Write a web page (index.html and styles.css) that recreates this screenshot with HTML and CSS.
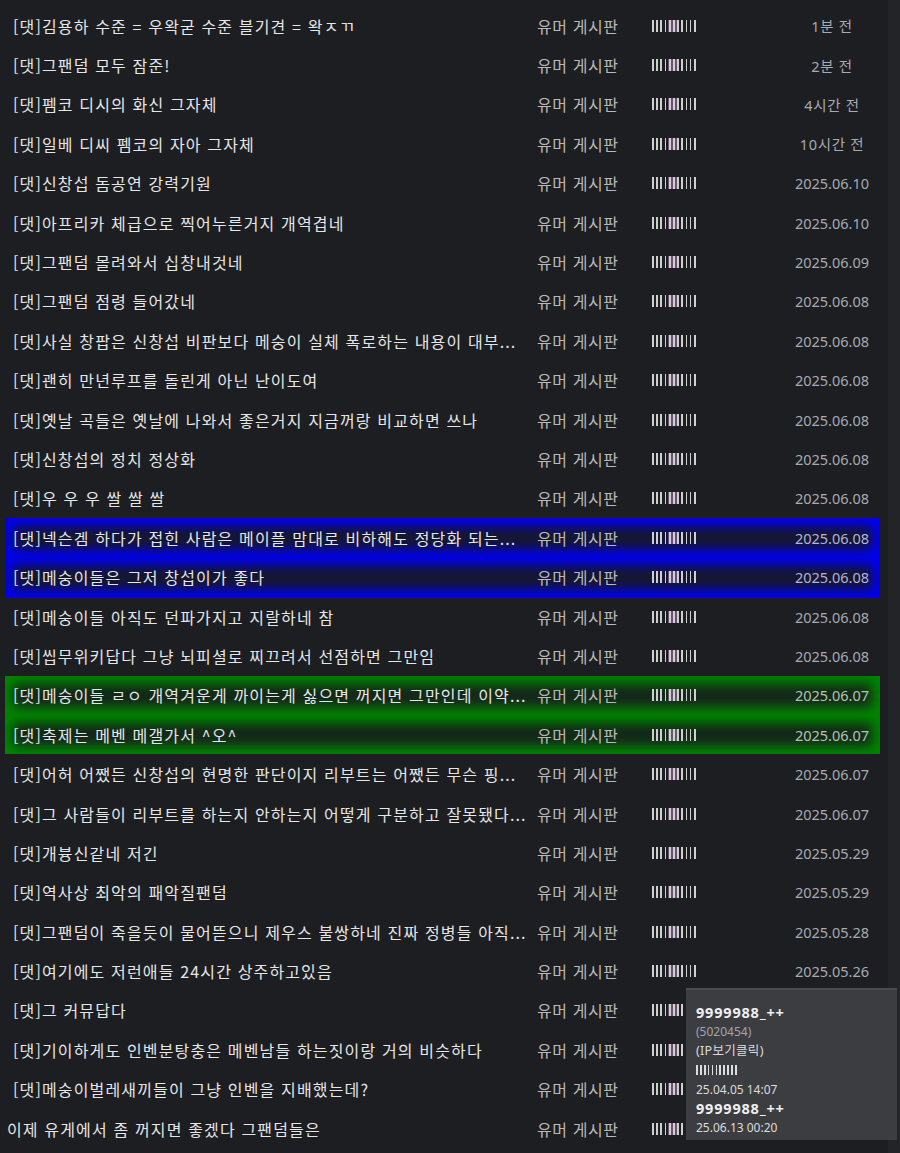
FILE: index.html
```html
<!DOCTYPE html>
<html lang="ko">
<head>
<meta charset="utf-8">
<title>댓글 목록</title>
<link rel="stylesheet" href="styles.css">
</head>
<body>
<div class="page">
  <div class="list">
    <div class="row"><span class="title">[댓]김용하 수준 = 우왁굳 수준 블기견 = 왁ㅈㄲ</span><span class="board">유머 게시판</span><span class="nickcell"><span class="nick"></span></span><span class="date date-rel">1분 전</span></div>
    <div class="row"><span class="title">[댓]그팬덤 모두 잠준!</span><span class="board">유머 게시판</span><span class="nickcell"><span class="nick"></span></span><span class="date date-rel">2분 전</span></div>
    <div class="row"><span class="title">[댓]펨코 디시의 화신 그자체</span><span class="board">유머 게시판</span><span class="nickcell"><span class="nick"></span></span><span class="date date-rel">4시간 전</span></div>
    <div class="row"><span class="title">[댓]일베 디씨 펨코의 자아 그자체</span><span class="board">유머 게시판</span><span class="nickcell"><span class="nick"></span></span><span class="date date-rel">10시간 전</span></div>
    <div class="row"><span class="title">[댓]신창섭 돔공연 강력기원</span><span class="board">유머 게시판</span><span class="nickcell"><span class="nick"></span></span><span class="date">2025.06.10</span></div>
    <div class="row"><span class="title">[댓]아프리카 체급으로 찍어누른거지 개역겹네</span><span class="board">유머 게시판</span><span class="nickcell"><span class="nick"></span></span><span class="date">2025.06.10</span></div>
    <div class="row"><span class="title">[댓]그팬덤 몰려와서 십창내것네</span><span class="board">유머 게시판</span><span class="nickcell"><span class="nick"></span></span><span class="date">2025.06.09</span></div>
    <div class="row"><span class="title">[댓]그팬덤 점령 들어갔네</span><span class="board">유머 게시판</span><span class="nickcell"><span class="nick"></span></span><span class="date">2025.06.08</span></div>
    <div class="row"><span class="title">[댓]사실 창팝은 신창섭 비판보다 메숭이 실체 폭로하는 내용이 대부...</span><span class="board">유머 게시판</span><span class="nickcell"><span class="nick"></span></span><span class="date">2025.06.08</span></div>
    <div class="row"><span class="title">[댓]괜히 만년루프를 돌린게 아닌 난이도여</span><span class="board">유머 게시판</span><span class="nickcell"><span class="nick"></span></span><span class="date">2025.06.08</span></div>
    <div class="row"><span class="title">[댓]옛날 곡들은 옛날에 나와서 좋은거지 지금꺼랑 비교하면 쓰나</span><span class="board">유머 게시판</span><span class="nickcell"><span class="nick"></span></span><span class="date">2025.06.08</span></div>
    <div class="row"><span class="title">[댓]신창섭의 정치 정상화</span><span class="board">유머 게시판</span><span class="nickcell"><span class="nick"></span></span><span class="date">2025.06.08</span></div>
    <div class="row"><span class="title">[댓]우 우 우 쌀 쌀 쌀</span><span class="board">유머 게시판</span><span class="nickcell"><span class="nick"></span></span><span class="date">2025.06.08</span></div>
    <div class="row row-blue"><span class="title">[댓]넥슨겜 하다가 접힌 사람은 메이플 맘대로 비하해도 정당화 되는...</span><span class="board">유머 게시판</span><span class="nickcell"><span class="nick"></span></span><span class="date">2025.06.08</span></div>
    <div class="row row-blue"><span class="title">[댓]메숭이들은 그저 창섭이가 좋다</span><span class="board">유머 게시판</span><span class="nickcell"><span class="nick"></span></span><span class="date">2025.06.08</span></div>
    <div class="row"><span class="title">[댓]메숭이들 아직도 던파가지고 지랄하네 참</span><span class="board">유머 게시판</span><span class="nickcell"><span class="nick"></span></span><span class="date">2025.06.08</span></div>
    <div class="row"><span class="title">[댓]씹무위키답다 그냥 뇌피셜로 찌끄려서 선점하면 그만임</span><span class="board">유머 게시판</span><span class="nickcell"><span class="nick"></span></span><span class="date">2025.06.08</span></div>
    <div class="row row-green"><span class="title">[댓]메숭이들 ㄹㅇ 개역겨운게 까이는게 싫으면 꺼지면 그만인데 이약...</span><span class="board">유머 게시판</span><span class="nickcell"><span class="nick"></span></span><span class="date">2025.06.07</span></div>
    <div class="row row-green"><span class="title">[댓]축제는 메벤 메갤가서 ^오^</span><span class="board">유머 게시판</span><span class="nickcell"><span class="nick"></span></span><span class="date">2025.06.07</span></div>
    <div class="row"><span class="title">[댓]어허 어쨌든 신창섭의 현명한 판단이지 리부트는 어쨌든 무슨 핑...</span><span class="board">유머 게시판</span><span class="nickcell"><span class="nick"></span></span><span class="date">2025.06.07</span></div>
    <div class="row"><span class="title">[댓]그 사람들이 리부트를 하는지 안하는지 어떻게 구분하고 잘못됐다...</span><span class="board">유머 게시판</span><span class="nickcell"><span class="nick"></span></span><span class="date">2025.06.07</span></div>
    <div class="row"><span class="title">[댓]개븅신같네 저긴</span><span class="board">유머 게시판</span><span class="nickcell"><span class="nick"></span></span><span class="date">2025.05.29</span></div>
    <div class="row"><span class="title">[댓]역사상 최악의 패악질팬덤</span><span class="board">유머 게시판</span><span class="nickcell"><span class="nick"></span></span><span class="date">2025.05.29</span></div>
    <div class="row"><span class="title">[댓]그팬덤이 죽을듯이 물어뜯으니 제우스 불쌍하네 진짜 정병들 아직...</span><span class="board">유머 게시판</span><span class="nickcell"><span class="nick"></span></span><span class="date">2025.05.28</span></div>
    <div class="row"><span class="title">[댓]여기에도 저런애들 24시간 상주하고있음</span><span class="board">유머 게시판</span><span class="nickcell"><span class="nick"></span></span><span class="date">2025.05.26</span></div>
    <div class="row"><span class="title">[댓]그 커뮤답다</span><span class="board">유머 게시판</span><span class="nickcell"><span class="nick"></span></span><span class="date">2025.05.26</span></div>
    <div class="row"><span class="title">[댓]기이하게도 인벤분탕충은 메벤남들 하는짓이랑 거의 비슷하다</span><span class="board">유머 게시판</span><span class="nickcell"><span class="nick"></span></span><span class="date">2025.05.26</span></div>
    <div class="row"><span class="title">[댓]메숭이벌레새끼들이 그냥 인벤을 지배했는데?</span><span class="board">유머 게시판</span><span class="nickcell"><span class="nick"></span></span><span class="date">2025.05.26</span></div>
    <div class="row row-post"><span class="title">이제 유게에서 좀 꺼지면 좋겠다 그팬덤들은</span><span class="board">유머 게시판</span><span class="nickcell"><span class="nick"></span></span><span class="date">2025.05.26</span></div>
  </div>
  <div class="rail"></div>
</div>

<div class="tooltip">
  <div class="tip-name">9999988_++</div>
  <div class="tip-id">(5020454)</div>
  <div class="tip-line tip-ko">(IP보기클릭)</div>
  <div class="tip-nick"><span class="nick nick-small"></span></div>
  <div class="tip-line">25.04.05 14:07</div>
  <div class="tip-name">9999988_++</div>
  <div class="tip-line">25.06.13 00:20</div>
</div>
</body>
</html>
```

FILE: styles.css
```css
html, body {
  margin: 0;
  padding: 0;
  background: #1c1e22;
}

body {
  font-family: "Noto Sans CJK KR", "Noto Sans", sans-serif;
  color: #e4e4e4;
  overflow: hidden;
}

.page {
  display: flex;
  min-height: 1153px;
}

.list {
  width: 875px;
  margin-left: 5px;
  padding-top: 6px;
  flex: none;
}

.rail {
  flex: 1;
  margin-left: 8px;
  background: #222428;
}

.row {
  display: grid;
  grid-template-columns: 524px 115px 132px 96px;
  align-items: center;
  height: 39.4px;
  padding-left: 8px;
  box-sizing: border-box;
}

.row-post {
  padding-left: 2px;
  grid-template-columns: 530px 115px 132px 96px;
}

.title {
  font-size: 16px;
  letter-spacing: 1.15px;
  color: #e6e6e6;
  white-space: nowrap;
  overflow: hidden;
  text-overflow: ellipsis;
  padding-right: 8px;
}

.board {
  font-size: 16px;
  letter-spacing: 0.6px;
  color: #b9b9b9;
  white-space: nowrap;
}

.nickcell {
  display: flex;
  align-items: center;
}

.nick {
  display: inline-block;
  width: 46px;
  height: 12px;
  background:
    linear-gradient(90deg, transparent 0 16px, rgba(230, 190, 235, 0.35) 16px 25px, transparent 25px 100%),
    repeating-linear-gradient(90deg, #cfcfcf 0 1.7px, transparent 1.7px 4.2px);
}

.nick-small {
  width: 43px;
  height: 10px;
  background: repeating-linear-gradient(90deg, #dcdcdc 0 1.7px, transparent 1.7px 3.9px);
}

.date {
  font-family: "Noto Sans", "Noto Sans CJK KR", sans-serif;
  font-size: 14.5px;
  color: #a7aab2;
  text-align: center;
  white-space: nowrap;
}

.date-rel {
  letter-spacing: 0.7px;
}

.row-blue {
  background: #15172e;
  box-shadow: inset 0 0 12px 8px #0000f0;
}

.row-blue .date {
  color: #b4b4d2;
}

.row-green {
  background: #14261a;
  box-shadow: inset 0 0 12px 8px #018501;
}

.row-green .date {
  color: #b4c4b4;
}

.tooltip {
  position: absolute;
  left: 686px;
  top: 988px;
  width: 211px;
  height: 152px;
  box-sizing: border-box;
  padding: 13px 10px 0 10px;
  background: #3b3d41;
  border-top: 2px solid #4a4c50;
  font-family: "Noto Sans", "Noto Sans CJK KR", sans-serif;
  font-size: 12px;
  line-height: 19.2px;
  color: #e2e2e2;
}

.tip-name {
  font-weight: 700;
  font-size: 14.5px;
  letter-spacing: 0.8px;
  color: #f0f0f0;
}

.tip-id {
  color: #a3a5aa;
}

.tip-line {
  color: #dcdcdc;
}

.tip-ko {
  font-size: 12.5px;
  letter-spacing: 0.3px;
}

.tip-nick {
  display: flex;
  align-items: center;
  height: 19.2px;
}
```
